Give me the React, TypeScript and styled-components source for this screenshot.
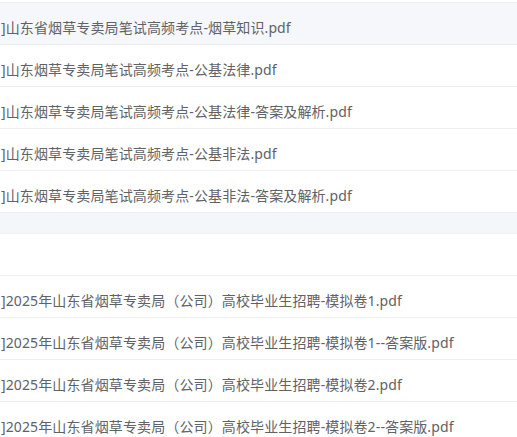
import styled, { createGlobalStyle } from 'styled-components';

const GlobalStyle = createGlobalStyle`
  html, body {
    margin: 0;
    padding: 0;
    background: #ffffff;
  }
  body {
    font-family: "Noto Sans", "Noto Sans CJK SC", sans-serif;
  }
`;

const Page = styled.div`
  padding-top: 2px;
  width: 100%;
  overflow: hidden;
`;

const FileList = styled.ul`
  list-style: none;
  margin: 0;
  padding: 0;
  border-top: 1px solid #ebeef5;
`;

const FileRow = styled.li<{ $active?: boolean }>`
  height: 41px;
  box-sizing: content-box;
  padding: 0 0 0 1px;
  display: flex;
  align-items: center;
  border-bottom: 1px solid #ebeef5;
  background: ${(p) => (p.$active ? '#f5f7fa' : '#ffffff')};
  color: #606266;
  font-size: 14px;
  line-height: 23px;
  letter-spacing: 0.12px;
  white-space: nowrap;
`;

const RowText = styled.span`
  display: block;
  padding-top: 8px;
`;

const ListFooter = styled.div`
  height: 20px;
  background: #f4f7f9;
  border-bottom: 1px solid #eef1f4;
`;

const Spacer = styled.div`
  height: 41px;
`;

const firstGroup = [
  ']山东省烟草专卖局笔试高频考点-烟草知识.pdf',
  ']山东烟草专卖局笔试高频考点-公基法律.pdf',
  ']山东烟草专卖局笔试高频考点-公基法律-答案及解析.pdf',
  ']山东烟草专卖局笔试高频考点-公基非法.pdf',
  ']山东烟草专卖局笔试高频考点-公基非法-答案及解析.pdf',
];

const secondGroup = [
  ']2025年山东省烟草专卖局（公司）高校毕业生招聘-模拟卷1.pdf',
  ']2025年山东省烟草专卖局（公司）高校毕业生招聘-模拟卷1--答案版.pdf',
  ']2025年山东省烟草专卖局（公司）高校毕业生招聘-模拟卷2.pdf',
  ']2025年山东省烟草专卖局（公司）高校毕业生招聘-模拟卷2--答案版.pdf',
];

export default function App() {
  return (
    <Page>
      <GlobalStyle />
      <FileList>
        {firstGroup.map((name, i) => (
          <FileRow key={name} $active={i === 0}>
            <RowText>{name}</RowText>
          </FileRow>
        ))}
      </FileList>
      <ListFooter />
      <Spacer />
      <FileList>
        {secondGroup.map((name) => (
          <FileRow key={name}>
            <RowText>{name}</RowText>
          </FileRow>
        ))}
      </FileList>
    </Page>
  );
}
